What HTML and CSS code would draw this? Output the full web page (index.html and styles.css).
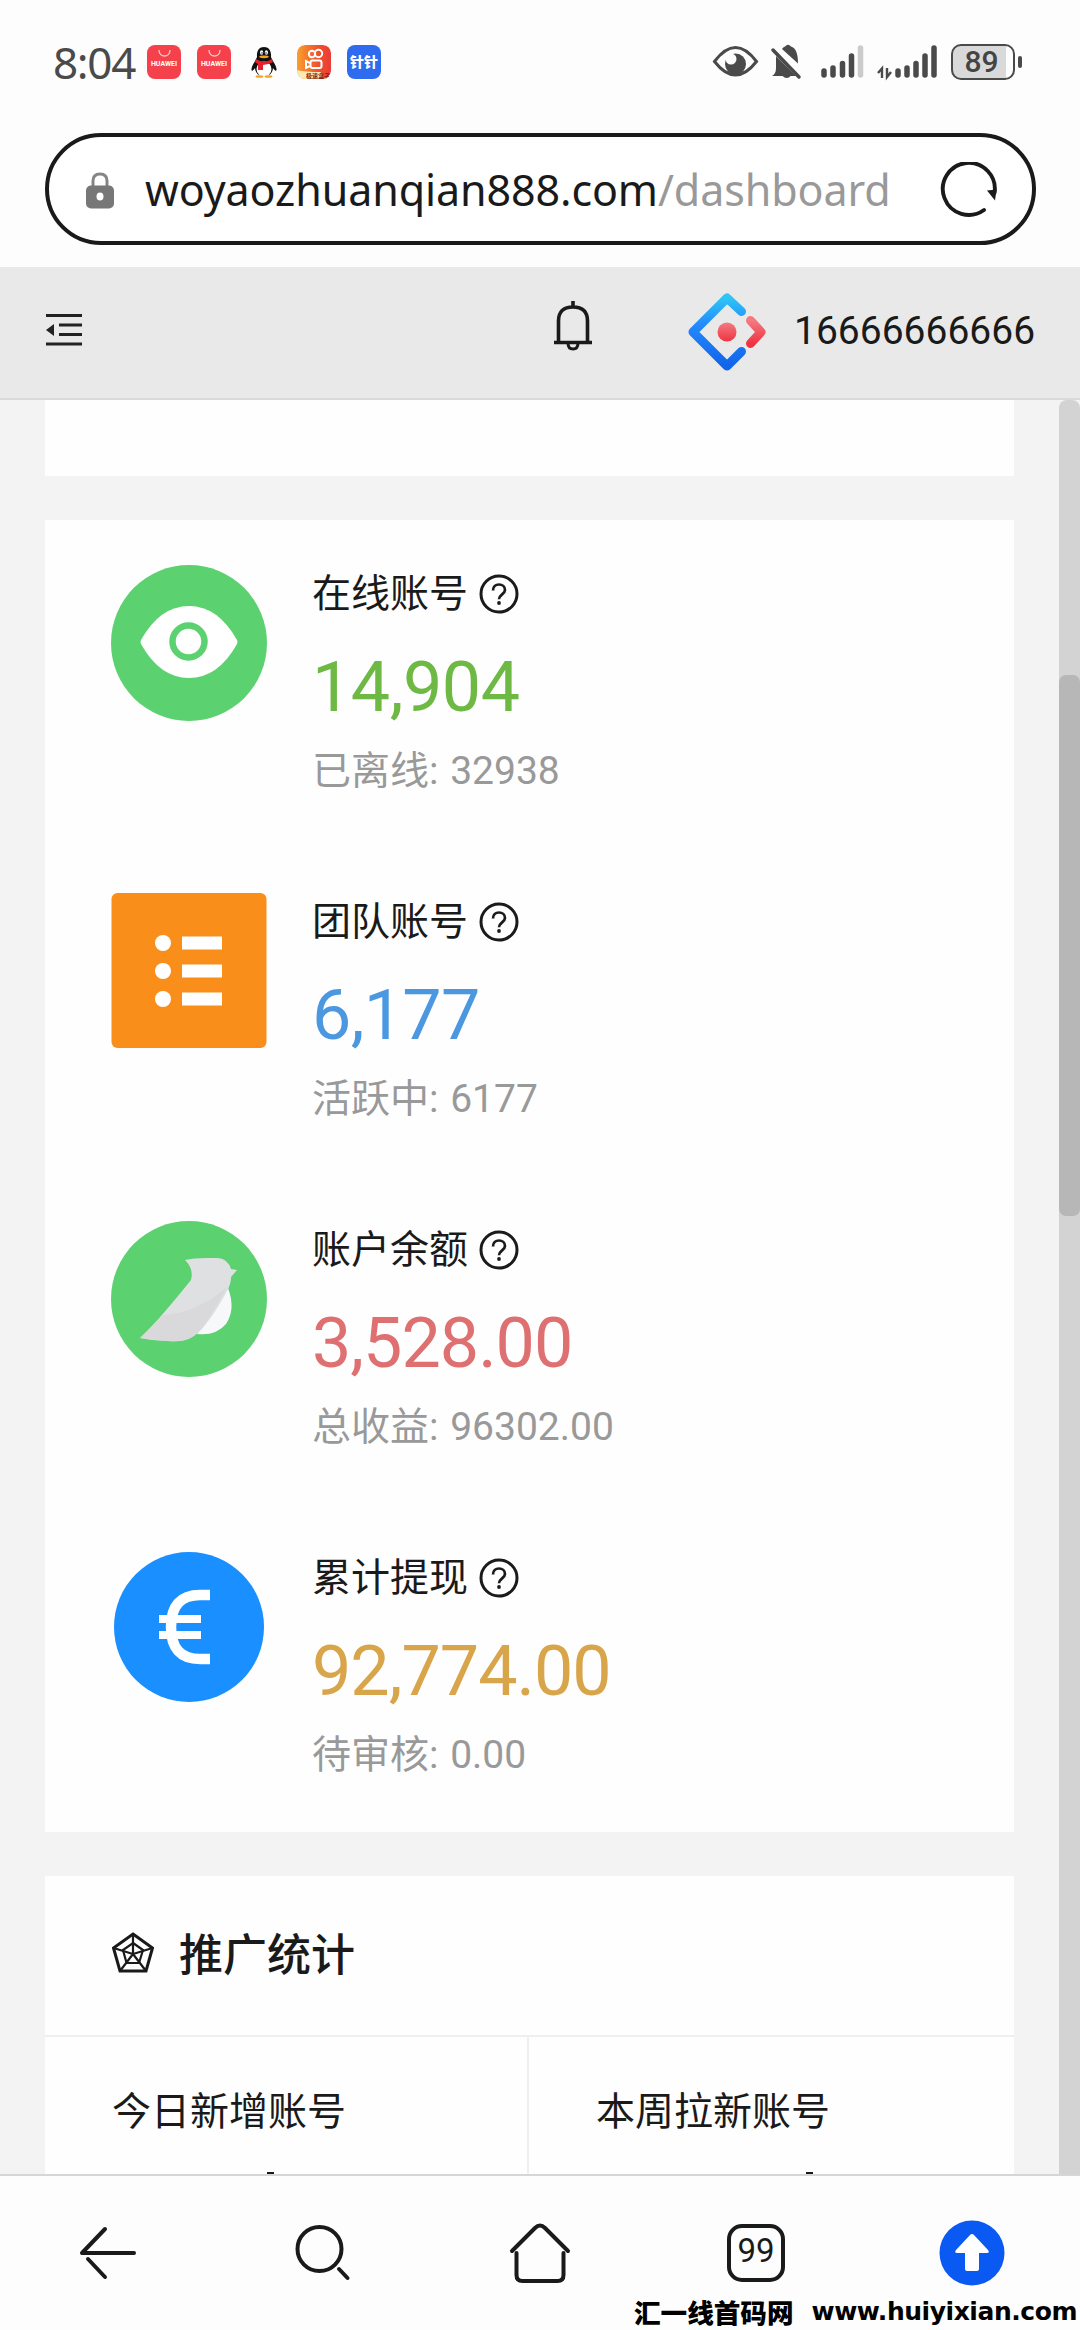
FILE: index.html
```html
<!DOCTYPE html>
<html lang="zh-CN">
<head>
    <meta charset="UTF-8">
    <meta name="viewport" content="width=device-width, initial-scale=1.0">
    <title>Dashboard</title>
    <link rel="stylesheet" href="styles.css">
</head>
<body>
    <svg class="defs">
        <symbol id="question" viewBox="0 0 40 40">
            <circle cx="20" cy="20" r="18" fill="none" stroke="#1a1a1a" stroke-width="3"/>
            <path d="M14 16.500c0-4 2.700-6 6-6s6 2.200 6 5.500c0 4-6 4.800-6 9.200" fill="none" stroke="#1a1a1a" stroke-width="2.700"/>
            <circle cx="20" cy="29" r="1.900" fill="#1a1a1a"/>
        </symbol>
    </svg>

    <div class="status-bar">
        <span class="time">8:04</span>
        <div class="apps">
            <div class="app huawei">
                <svg width="34" height="12" viewBox="0 0 34 12"><path d="M12 5c0 8 11 8 11 0" fill="none" stroke="#ffc5c5" stroke-width="1.300"/></svg>
                <span>HUAWEI</span>
            </div>
            <div class="app huawei">
                <svg width="34" height="12" viewBox="0 0 34 12"><path d="M12 5c0 8 11 8 11 0" fill="none" stroke="#ffc5c5" stroke-width="1.300"/></svg>
                <span>HUAWEI</span>
            </div>
            <svg class="app" viewBox="0 0 34 34">
                <path d="M17 2c-5 0-7.500 4-7 10-2 5-6 9-5.500 13 .5 2 2.500-.5 3.500-2 0 3 2 6 4 7h10c2-1 4-4 4-7 1 1.500 3 4 3.500 2 .5-4-3.500-8-5.500-13 .5-6-2-10-7-10z" fill="#111"/>
                <ellipse cx="17" cy="24" rx="7.500" ry="7.500" fill="#fff"/>
                <ellipse cx="14.600" cy="7.500" rx="1.600" ry="2.300" fill="#fff"/>
                <ellipse cx="19.400" cy="7.500" rx="1.600" ry="2.300" fill="#fff"/>
                <circle cx="15" cy="8" r=".7"/>
                <circle cx="19" cy="8" r=".7"/>
                <ellipse cx="17" cy="11.800" rx="4.800" ry="1.400" fill="#f4a321"/>
                <path d="M9 14q8 5 16 0l1 3q-5 3-10 3v5h-5v-6l-3-2z" fill="#e5202b"/>
                <ellipse cx="12.500" cy="31.500" rx="4" ry="1.300" fill="#f4a321"/>
                <ellipse cx="21.500" cy="31.500" rx="4" ry="1.300" fill="#f4a321"/>
            </svg>
            <svg class="app" viewBox="0 0 34 34">
                <defs><linearGradient id="kuai"><stop offset="0" stop-color="#f8a02c"/><stop offset=".6" stop-color="#f1532c"/><stop offset="1" stop-color="#e93c35"/></linearGradient></defs>
                <rect width="34" height="34" rx="8" fill="url(#kuai)"/>
                <path d="M0 25q7 2 24 2 2 5-1 7H8q-7 0-8-9z" fill="#ffe9b8"/>
                <g fill="none" stroke="#fff" stroke-width="2">
                    <circle cx="15" cy="9" r="3.200"/><circle cx="21.500" cy="8.500" r="3.700"/>
                    <rect x="13.500" y="15.500" width="11" height="7.500" rx="2"/><path d="M13 18l-4-2v7l4-2"/>
                </g>
                <text x="9" y="33" class="kuai-text">极速盒子</text>
            </svg>
            <div class="app zhen">针针</div>
        </div>
        <div class="signals">
            <svg width="230" height="40" viewBox="710 42 230 40" fill="none" stroke="#4a4a4a">
                <path d="M714.500 61.500q21-28 42 0-21 27-42 0z" stroke-width="3"/>
                <circle cx="735.500" cy="64" r="10.500" fill="#4a4a4a" stroke="none"/>
                <circle cx="731" cy="59" r="5.500" fill="#fdfdfd" stroke="none"/>
                <path d="M776 56l20 20h-24q4-2 4-8zM782 49q1-2 3-2.500 3-3.500 6 0 7 2 7 17zM782 75.500h9q-4 5-9 0z" fill="#4a4a4a" stroke="none"/>
                <path d="M773 50l26 27" stroke-width="3.500" stroke-linecap="round"/>
                <g stroke-width="5.500" stroke-linecap="round">
                    <path d="M824 71v4M833 68v7M842.500 63.500V75M851.500 56v19M898 71v4M907 68v7M916 63.500V75M925 56v19M934 48v27"/>
                    <path d="M860.500 48v27" stroke="#cbcbcb"/>
                </g>
                <path d="M878 73l4-4.500V78M887 68v9l4-5" stroke-width="2.400"/>
            </svg>
            <div class="battery"><span>89</span></div>
            <i class="battery-cap"></i>
        </div>
    </div>

    <div class="address-bar">
        <svg class="lock" width="28" height="37" viewBox="0 0 28 37">
            <path d="M7 14V9q0-7 7-7t7 7v5" fill="none" stroke="#858585" stroke-width="3"/>
            <rect y="13.500" width="28" height="23" rx="5" fill="#777"/>
            <ellipse cx="14" cy="24.500" rx="3.500" ry="4" fill="#fff"/>
        </svg>
        <span class="url">woyaozhuanqian888.com<em>/dashboard</em></span>
        <svg class="reload" width="58" height="58" viewBox="0 0 58 58">
            <path d="M44 48A26 26 0 1 1 54.500 31" fill="none" stroke="#1a1a1a" stroke-width="3.900" stroke-linecap="round"/>
            <path d="M47 28.500l9.500-1-1.500 11z" fill="#1a1a1a"/>
        </svg>
    </div>

    <div class="header">
        <svg class="menu" width="36" height="32" viewBox="0 0 36 32">
            <path d="M0 1.500h36M13 11h23M13 20.500h23M0 30h36" stroke="#222" stroke-width="3.200"/>
            <path d="M0 16l8-6v12z" fill="#222"/>
        </svg>
        <svg class="bell" width="38" height="50" viewBox="0 0 38 50">
            <path d="M4.500 41V20Q4.500 6 19 6t14.500 14v21M0 41.500h38M19 0v6" fill="none" stroke="#1a1a1a" stroke-width="3.600"/>
            <path d="M14 42q0 6 5 6t5-6" fill="none" stroke="#1a1a1a" stroke-width="3"/>
        </svg>
        <svg class="logo" width="78" height="80" viewBox="0 0 78 80">
            <defs>
                <linearGradient id="blue" x1="0" y1="0" x2="0" y2="1"><stop offset="0" stop-color="#2dc5f5"/><stop offset=".4" stop-color="#2289fb"/><stop offset="1" stop-color="#1264e8"/></linearGradient>
                <linearGradient id="red" x1="0" y1="0" x2="0" y2="1"><stop offset="0" stop-color="#f37a7f"/><stop offset="1" stop-color="#ee3443"/></linearGradient>
            </defs>
            <path d="M53.500 19.500L39 6 5 40l34 34 14.500-14.500" fill="none" stroke="url(#blue)" stroke-width="9" stroke-linecap="round" stroke-linejoin="round"/>
            <path d="M62.500 28.500L73 40 62.500 51.500" fill="none" stroke="url(#red)" stroke-width="9" stroke-linecap="round" stroke-linejoin="round"/>
            <circle cx="39" cy="40" r="9.500" fill="url(#red)"/>
        </svg>
        <span class="user">16666666666</span>
    </div>

    <div class="main">
        <div class="content">
            <div class="card top-card"></div>
            <div class="card stats">
                <div class="stat">
                    <svg class="stat-icon" viewBox="0 0 156 156">
                        <circle cx="78" cy="78" r="78" fill="#5bd170"/>
                        <path d="M30 75Q49 41 78 41t48 34q1 2 0 4-19 34-48 34T30 79q-1-2 0-4z" fill="#fff"/>
                        <circle cx="77.500" cy="76.500" r="16" fill="none" stroke="#5bd170" stroke-width="6.500"/>
                    </svg>
                    <div>
                        <div class="label">在线账号 <svg><use href="#question"/></svg></div>
                        <div class="value green">14,904</div>
                        <div class="sub">已离线: <span>32938</span></div>
                    </div>
                </div>
                <div class="stat">
                    <svg class="stat-icon" viewBox="0 0 156 156">
                        <rect x=".5" width="155" height="155" rx="6" fill="#f98e1b"/>
                        <g fill="#fff">
                            <circle cx="52" cy="50" r="8"/><rect x="71" y="43.500" width="40" height="13"/>
                            <circle cx="52" cy="78" r="8"/><rect x="71" y="71.500" width="40" height="13"/>
                            <circle cx="52" cy="106" r="8"/><rect x="71" y="99.500" width="40" height="13"/>
                        </g>
                    </svg>
                    <div>
                        <div class="label">团队账号 <svg><use href="#question"/></svg></div>
                        <div class="value blue">6,177</div>
                        <div class="sub">活跃中: <span>6177</span></div>
                    </div>
                </div>
                <div class="stat">
                    <svg class="stat-icon" viewBox="0 0 156 156">
                        <circle cx="78" cy="78" r="78" fill="#5bd170"/>
                        <path d="M117 67q8 21-2 36-10 12-29 10z" fill="#f6f8fa"/>
                        <path d="M74 39q8-2 22-2h11q10 1 13 11l6 1-6 7q0 7-4 14-10 19-21 33-12 16-26 17-20 1-40-3 13-11 51-58 3-11-6-20z" fill="#dfe0e1"/>
                        <path d="M52 94q34-2 64-28-11 21-22 37-11 16-26 17-20 1-39-3z" fill="#d9d9db"/>
                    </svg>
                    <div>
                        <div class="label">账户余额 <svg><use href="#question"/></svg></div>
                        <div class="value red">3,528.00</div>
                        <div class="sub">总收益: <span>96302.00</span></div>
                    </div>
                </div>
                <div class="stat">
                    <svg class="stat-icon" viewBox="0 0 156 156">
                        <circle cx="78" cy="78" r="75" fill="#1a8fff"/>
                        <path d="M99 46H89Q60 46 60 78t29 32h10" fill="none" stroke="#fff" stroke-width="10.500"/>
                        <path d="M48 70h42M48 86h42" stroke="#fff" stroke-width="8"/>
                    </svg>
                    <div>
                        <div class="label">累计提现 <svg><use href="#question"/></svg></div>
                        <div class="value gold">92,774.00</div>
                        <div class="sub">待审核: <span>0.00</span></div>
                    </div>
                </div>
            </div>
            <div class="card promo">
                <div class="promo-head">
                    <svg width="42" height="41" viewBox="0 0 42 41" fill="none" stroke="#1a1a1a" stroke-width="3">
                        <path d="M21 2L40.500 16 34 39H8L1.500 16z"/>
                        <path d="M21 11l10 7-4 13H14.500L11 18z" stroke-width="2.200"/>
                        <path d="M21 2v20M40.500 16L21 22l13 17M1.500 16L21 22 8 39" stroke-width="2.200"/>
                    </svg>
                    <span>推广统计</span>
                </div>
                <div class="promo-grid">
                    <div class="cell">今日新增账号<i></i></div>
                    <div class="cell">本周拉新账号<i></i></div>
                </div>
            </div>
        </div>
        <div class="scrollbar"><div class="thumb"></div></div>
    </div>

    <div class="nav">
        <svg viewBox="0 0 66 66"><path d="M7 33h52M7 33l23-24M13 39l17 18" /></svg>
        <svg viewBox="0 0 66 66"><circle cx="28.500" cy="29" r="22"/><path d="M48 49l8.500 9"/></svg>
        <svg viewBox="0 0 66 66"><path d="M5 31L28 8q5-5 10 0l23 23M9.500 33v22q0 6 6 6h35q6 0 6-6V33"/></svg>
        <div class="tabs">99</div>
        <svg viewBox="0 0 66 66">
            <circle cx="33" cy="33" r="32.500" class="up-bg"/>
            <path d="M33 14q1 0 2 1l14 15q2 3-1 3h-8v16q0 2-2 2H28q-2 0-2-2V33h-8q-3 0-1-3l14-15q1-1 2-1z" class="up-arrow"/>
        </svg>
    </div>
    <div class="watermark"><span>汇一线首码网</span><span class="site">www.huiyixian.com</span></div>
</body>
</html>
```
FILE: styles.css
```css
* { box-sizing: border-box; }
body { margin: 0; width: 1080px; height: 2330px; display: flex; flex-direction: column; overflow: hidden; position: relative; background: #fdfdfd; color: #1a1a1a; font-family: Roboto, "Noto Sans CJK SC", sans-serif; }
svg { display: block; flex: none; }
.defs { position: absolute; width: 0; height: 0; }

.status-bar { height: 133px; padding: 42px 58px 0 53px; display: flex; align-items: flex-start; }
.time { width: 94px; font: 44px/40px "Noto Sans", sans-serif; letter-spacing: -1.3px; color: #4a4a4a; white-space: nowrap; }
.apps { display: flex; gap: 16px; padding-top: 3px; }
.app { width: 34px; height: 34px; border-radius: 8px; flex: none; }
.huawei { background: #f5414b; color: #fff; text-align: center; }
.huawei span { display: block; font: bold 7px/15px Roboto, sans-serif; white-space: nowrap; }
.kuai-text { font: bold 6px "Noto Sans CJK SC", sans-serif; fill: #7c2412; }
.zhen { background: #2f6bee; color: #fff; font: 900 14px/32px "Noto Sans CJK SC", sans-serif; text-align: center; }
.signals { display: flex; margin-left: auto; align-items: center; }
.battery { width: 64px; height: 36px; margin-left: 11px; border: 2.500px solid #4a4a4a; border-radius: 10px; background: linear-gradient(90deg, #d9d9d9 88%, #fdfdfd 88%); display: flex; align-items: center; justify-content: center; font: 500 30px/30px Roboto, sans-serif; color: #444; }
.battery span { margin-right: 3px; }
.battery-cap { width: 4px; height: 12px; margin-left: 3px; border-radius: 2px; background: #4a4a4a; }

.address-bar { height: 112px; margin: 0 44px 22px 45px; padding: 0 34px 0 41px; border: 4px solid #1a1a1a; border-radius: 56px; display: flex; align-items: center; background: #fff; }
.address-bar .lock { margin: 3px 31px 0 -4px; }
.url { padding-top: 2px; font: 43px/60px "Noto Sans", sans-serif; letter-spacing: -.1px; white-space: nowrap; }
.url em { font-style: normal; color: #999; }
.reload { margin: 3px 0 0 auto; }

.header { height: 133px; padding: 0 44px 2px 46px; display: flex; align-items: center; background: #e9e9e9; border-bottom: 2px solid #dadada; flex: none; }
.menu { margin-top: -4px; }
.bell { margin: -11px 96px 0 auto; }
.logo { margin-top: 1px; }
.user { width: 242px; margin-left: 28px; font-size: 39px; margin-top: -2px; }

.main { height: 1774px; display: flex; flex: none; overflow: hidden; background: #f3f3f3; }
.content { width: 969px; margin-left: 45px; }
.card { background: #fefefe; }
.top-card { height: 76px; margin-bottom: 44px; }
.stats { margin-bottom: 44px; }
.stat { height: 328px; padding: 45px 66px; display: flex; gap: 45px; }
.stat-icon { width: 156px; height: 156px; }
.label { height: 58px; display: flex; align-items: center; gap: 11px; font-size: 39px; line-height: 58px; }
.label svg { width: 40px; height: 40px; }
.value { height: 123px; font-size: 70px; line-height: 128px; letter-spacing: -1px; }
.green { color: #6db944; letter-spacing: -.5px; }
.blue { color: #4b98e0; letter-spacing: -.7px; }
.red { color: #de7072; }
.gold { color: #d9a54b; }
.sub { font-size: 39px; line-height: 50px; color: #999; white-space: nowrap; }
.sub span { margin-left: 2px; }

.promo-head { height: 161px; padding: 0 0 7px 67px; display: flex; align-items: center; gap: 25px; border-bottom: 2px solid #efefef; font-size: 44px; font-weight: 500; }
.promo-grid { display: grid; grid-template-columns: 482px 487px; height: 140px; }
.cell { padding-left: 67px; font-size: 39px; line-height: 150px; position: relative; }
.cell + .cell { border-left: 2px solid #efefef; }
/* top edge of the figure below the fold */
.cell i { position: absolute; left: 222px; top: 135px; width: 7px; height: 2px; background: #1a1a1a; }
.cell + .cell i { left: 277px; }
.scrollbar { width: 21px; margin-left: auto; padding-top: 275px; background: #d3d3d3; border-radius: 8px 8px 0 0; }
.thumb { height: 541px; border-radius: 7px; background: #b7b7b7; }

.nav { height: 156px; padding: 44px 75px 0; display: flex; justify-content: space-between; border-top: 2px solid #d6d6d6; background: #fdfdfd; flex: none; }
.nav svg { width: 66px; height: 66px; fill: none; stroke: #1a1a1a; stroke-width: 4; stroke-linecap: round; stroke-linejoin: round; }
.nav .up-bg { fill: #0b59f3; stroke: none; }
.nav .up-arrow { fill: #fff; stroke: none; }
.tabs { width: 58px; height: 58px; margin: 4px 4px 0; border: 4px solid #1a1a1a; border-radius: 15px; font: 33px/46px Roboto, sans-serif; text-align: center; }
.watermark { position: absolute; right: 3px; bottom: 2px; display: flex; align-items: center; gap: 18px; color: #000; font: 900 26.600px/32px "Noto Sans CJK SC", sans-serif; white-space: nowrap; }
.watermark .site { font: bold 25px/32px "DejaVu Sans", sans-serif; letter-spacing: -.45px; }
```
